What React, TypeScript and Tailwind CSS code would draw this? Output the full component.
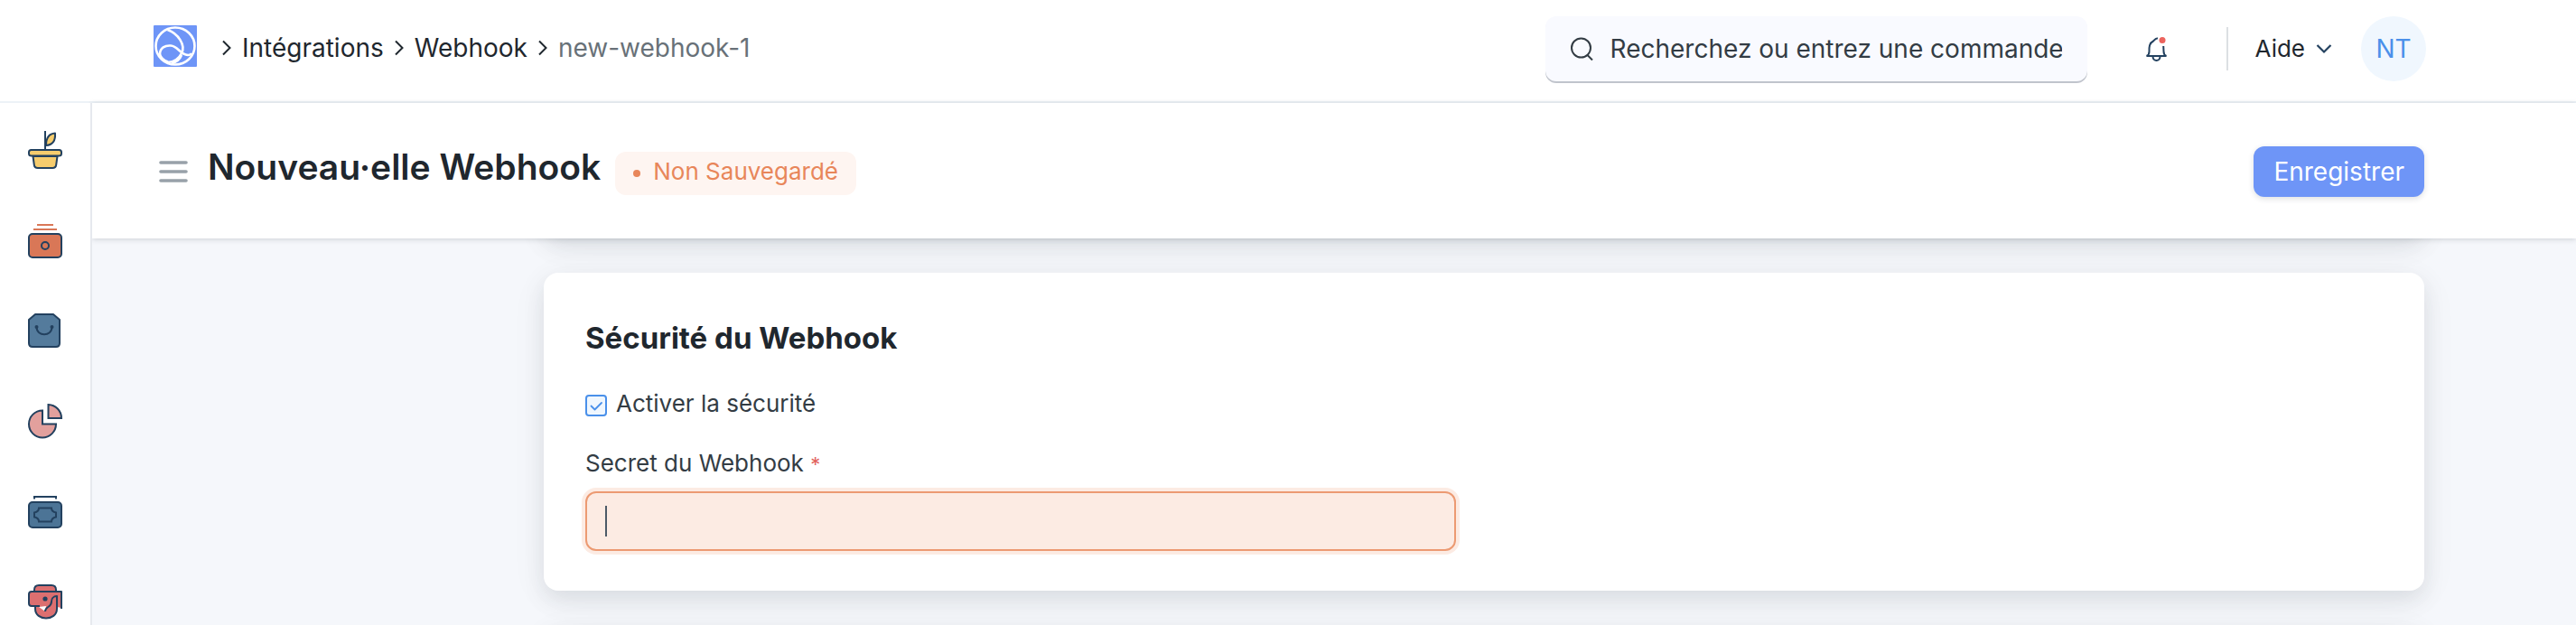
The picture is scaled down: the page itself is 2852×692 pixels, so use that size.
import React from "react";

const ink = "#23415f";

function PlantIcon() {
  return (
    <svg viewBox="0 0 48 48" className="size-12" fill="none" stroke={ink} strokeWidth="2" strokeLinejoin="round">
      <path d="M24 3v21" />
      <path d="M25 19c0-7 2-13 10-13.500C35.500 13 33 18.500 25 19z" fill="#f6cc6d" />
      <path d="M10.500 31l1.300 9.500q.5 3.500 4 3.500h16.400q3.500 0 4-3.500l1.300-9.500z" fill="#f6cc6d" />
      <rect x="6" y="24" width="36" height="6.500" rx="2.500" fill="#f6cc6d" />
    </svg>
  );
}

function WalletIcon() {
  return (
    <svg viewBox="0 0 48 48" className="size-12" fill="none" stroke={ink} strokeWidth="2">
      <path d="M15 7h18M11 12h26" stroke="#d97757" />
      <rect x="6" y="17" width="36" height="26" rx="4" fill="#d97757" />
      <circle cx="24" cy="30" r="4" />
    </svg>
  );
}

function BagIcon() {
  return (
    <svg viewBox="0 0 48 48" className="size-12" fill="none" stroke={ink} strokeWidth="2" strokeLinejoin="round">
      <path d="M13 6h20l7 6v26q0 4-4 4H10q-4 0-4-4V12z" fill="#547b9c" />
      <path d="M14.500 20c0 11 17 11 17 0" />
      <circle cx="14.500" cy="20" r="1" fill={ink} />
      <circle cx="31.500" cy="20" r="1" fill={ink} />
    </svg>
  );
}

function PieIcon() {
  return (
    <svg viewBox="0 0 48 48" className="size-12" fill="#e2a09d" stroke={ink} strokeWidth="2">
      <path d="M21 12.500A15 15 0 1 0 36 27.500H21z" />
      <path d="M27.500 6v15H42A15 15 0 0 0 27.500 6z" />
    </svg>
  );
}

function CashIcon() {
  return (
    <svg viewBox="0 0 48 48" className="size-12" fill="none" stroke={ink} strokeWidth="2">
      <path d="M12 10.500V8h24v2.500" />
      <rect x="6" y="14" width="36" height="28" rx="4" fill="#4c7496" />
      <path d="M17 20.500h14q0 4 5 5v5q-5 1-5 5H17q0-4-5-5v-5q5-1 5-5z" />
    </svg>
  );
}

function MaskIcon() {
  return (
    <svg viewBox="0 0 48 48" className="size-12" fill="none" stroke={ink} strokeWidth="2" strokeLinejoin="round">
      <path d="M13 30v2c0 14 24 14 24 0V18H13z" fill="#dc6f70" />
      <path d="M12 13v-2q0-5 5-5h14q5 0 5 5v2" fill="#dc6f70" />
      <path d="M42 31V13H9q-3 0-3 3v10q0 3 3 3h9q5 0 7 5c0-6 7-5 7-11 0-3 2-5 5-5v12z" fill="#dc6f70" stroke="none" />
      <path d="M17 30l8-1-1 6z" fill="#fff" stroke="none" />
      <path d="M42 32V13H9q-3 0-3 3v10q0 3 3 3h9M24 35c0-6 7-4 7-11 0-3 2-6 6-6v13" />
      <circle cx="24" cy="21" r="1.600" fill={ink} />
    </svg>
  );
}

function Logo() {
  return (
    <svg viewBox="0 0 48 46" className="h-[46px] w-12">
      <rect width="48" height="46" rx="1" fill="#6e95f7" />
      <g fill="none" stroke="#fff" strokeWidth="2.600">
        <ellipse cx="24" cy="23" rx="21.500" ry="20.500" />
        <path d="M15.500 5C27 9 36 22 31 31c-3 6-9 9.500-15 10" />
        <path d="M7 32C7 25 13 22 19 22.500 27 23 29 32 38 33q3 0 4-2" />
        <path d="M7 32c1 4 5 7 9 8.500" />
        <path d="M20 42c5-1 9-4 11-9" />
      </g>
    </svg>
  );
}

function Chevron() {
  return (
    <svg viewBox="0 0 12 18" className="h-[18px] w-3 shrink-0" fill="none" stroke="#1f272e" strokeWidth="2">
      <path d="M2 1.500L9.500 9 2 16.500" />
    </svg>
  );
}

const navItems = [
  { label: "Croissance", icon: <PlantIcon /> },
  { label: "Comptabilité", icon: <WalletIcon /> },
  { label: "Ventes", icon: <BagIcon /> },
  { label: "Rapports", icon: <PieIcon /> },
  { label: "Paie", icon: <CashIcon /> },
  { label: "Personnes", icon: <MaskIcon /> },
];

const cardShadow = "shadow-[0_8px_48px_rgba(25,39,52,0.04),0_10px_24px_rgba(25,39,52,0.10)]";

export default function App() {
  return (
    <div className="flex h-screen flex-col overflow-hidden bg-[#f5f7fb] font-['Inter','Noto_Sans',sans-serif] text-[26px] leading-8 text-[#1f272e]">
      <header className="flex h-[114px] shrink-0 items-center justify-between border-b-2 border-[#edf2f7] bg-white pr-[166px] pb-1 pl-[170px]">
        <nav aria-label="Fil d'Ariane" className="flex items-center gap-[11px] pb-0.5 text-[28px]">
          <a href="#accueil" aria-label="Accueil" className="mr-4 -mt-1">
            <Logo />
          </a>
          <Chevron />
          <a href="#integrations">Intégrations</a>
          <Chevron />
          <a href="#webhook">Webhook</a>
          <Chevron />
          <span className="text-[#687178]">new-webhook-1</span>
        </nav>
        <div className="flex items-center">
          <label className="flex h-[72px] w-[600px] items-center gap-[18px] rounded-xl bg-[#f9faff] px-7 shadow-[0_2px_0_#c0c4cc]">
            <svg viewBox="0 0 26 26" className="size-[26px] shrink-0" fill="none" stroke="#333c44" strokeWidth="2">
              <circle cx="11.500" cy="12" r="10.500" />
              <path d="M18.500 20l5.500 5.500" />
            </svg>
            <input
              type="text"
              aria-label="Recherche"
              placeholder="Recherchez ou entrez une commande"
              className="min-w-0 flex-1 bg-transparent text-[28px] outline-none placeholder:text-[#333c44]"
            />
          </label>
          <button type="button" aria-label="Notifications" className="ml-16">
            <svg viewBox="0 0 26 28" className="h-7 w-[26px]" fill="none" stroke={ink} strokeWidth="2">
              <path d="M14 2.500c-3-.5-3 2-5 3C4 8 4.500 13 4.500 17q0 4-3 5h22q-3-1-3-5l-.3-6" />
              <path d="M8.500 22.500c0 6 8 6 8 0" />
              <circle cx="19" cy="4.500" r="3.500" fill="#ec645e" stroke="none" />
            </svg>
          </button>
          <div className="ml-16 h-12 w-0.5 bg-[#dce0e3]" />
          <button type="button" className="ml-[30px] flex items-center gap-3">
            Aide
            <svg viewBox="0 0 18 12" className="h-3 w-[18px]" fill="none" stroke={ink} strokeWidth="2.200">
              <path d="M1.500 2L9 9.500 16.500 2" />
            </svg>
          </button>
          <div className="ml-8 flex size-[72px] items-center justify-center rounded-full bg-[#f0f7fe] text-[28px] text-[#4a90ea]">
            NT
          </div>
        </div>
      </header>

      <div className="flex min-h-0 flex-1">
        <aside className="relative z-20 w-[102px] shrink-0 overflow-hidden border-r-2 border-[#e6e9ee] bg-white pt-7">
          <nav aria-label="Modules" className="flex flex-col items-center gap-[52px]">
            {navItems.map((item) => (
              <a key={item.label} href="#module" aria-label={item.label}>
                {item.icon}
              </a>
            ))}
          </nav>
        </aside>

        <div className="flex min-w-0 flex-1 flex-col">
          <div className="relative z-10 flex h-[150px] shrink-0 items-center justify-between bg-white pt-0.5 pr-[168px] pl-[74px] shadow-[0_1px_6px_rgba(25,39,52,0.18)]">
            <div className="flex items-center">
              <button type="button" aria-label="Menu">
                <svg viewBox="0 0 32 26" className="h-[26px] w-8" stroke="#98a1a9" strokeWidth="3.600" strokeLinecap="round">
                  <path d="M2 3h28M2 13h28M2 23h28" />
                </svg>
              </button>
              <h1 className="ml-[22px] pb-2.5 text-[39px] leading-[48px] font-semibold">Nouveau·elle Webhook</h1>
              <span className="mt-1 ml-4 flex h-12 items-center gap-3.5 rounded-xl bg-[#fef5f1] px-5 pb-1 text-[#e8865a]">
                <span className="mt-1 size-2 rounded-full bg-[#e8865a]" />
                Non Sauvegardé
              </span>
            </div>
            <button
              type="button"
              className="h-14 rounded-xl bg-[#6e95f7] px-[22px] text-[28px] text-white shadow-[0_2px_6px_rgba(25,39,52,0.15)]"
            >
              Enregistrer
            </button>
          </div>

          <main className="min-h-0 flex-1 overflow-hidden pr-[168px] pl-[500px]">
            <div className={`-mt-[82px] h-20 rounded-2xl bg-white ${cardShadow}`} />
            <section className={`relative mt-10 rounded-2xl bg-white px-[46px] pt-[52px] pb-11 ${cardShadow}`}>
              <h2 className="text-[33px] leading-10 font-bold">Sécurité du Webhook</h2>
              <label className="mt-[37px] flex items-center gap-2.5 text-[#333c44]">
                <span className="relative mt-1 flex size-6">
                  <input
                    type="checkbox"
                    defaultChecked
                    className="size-6 appearance-none rounded border-2 border-[#4a90ea] bg-[#f0f7fe]"
                  />
                  <svg
                    viewBox="0 0 24 24"
                    className="pointer-events-none absolute inset-0 size-6"
                    fill="none"
                    stroke="#4a90ea"
                    strokeWidth="1.800"
                    strokeLinecap="round"
                    strokeLinejoin="round"
                  >
                    <path d="M6.500 12.500l4 4 7.500-7.500" />
                  </svg>
                </span>
                Activer la sécurité
              </label>
              <label htmlFor="secret" className="mt-[34px] block text-[#333c44]">
                Secret du Webhook <span className="text-[22px] text-[#e2635c]">*</span>
              </label>
              <div className="relative mt-3.5 w-[964px] max-w-full">
                <input
                  id="secret"
                  type="text"
                  required
                  className="block h-[66px] w-full rounded-xl border-2 border-[#ec9a72] bg-[#fcebe3] px-5 ring-4 ring-[#fcebe3] outline-none"
                />
                <span className="pointer-events-none absolute top-4 left-[22px] h-[34px] w-0.5 bg-[#4c5a67]" />
              </div>
            </section>
            <div className={`relative mt-10 h-20 rounded-2xl bg-white ${cardShadow}`} />
          </main>
        </div>
      </div>
    </div>
  );
}
